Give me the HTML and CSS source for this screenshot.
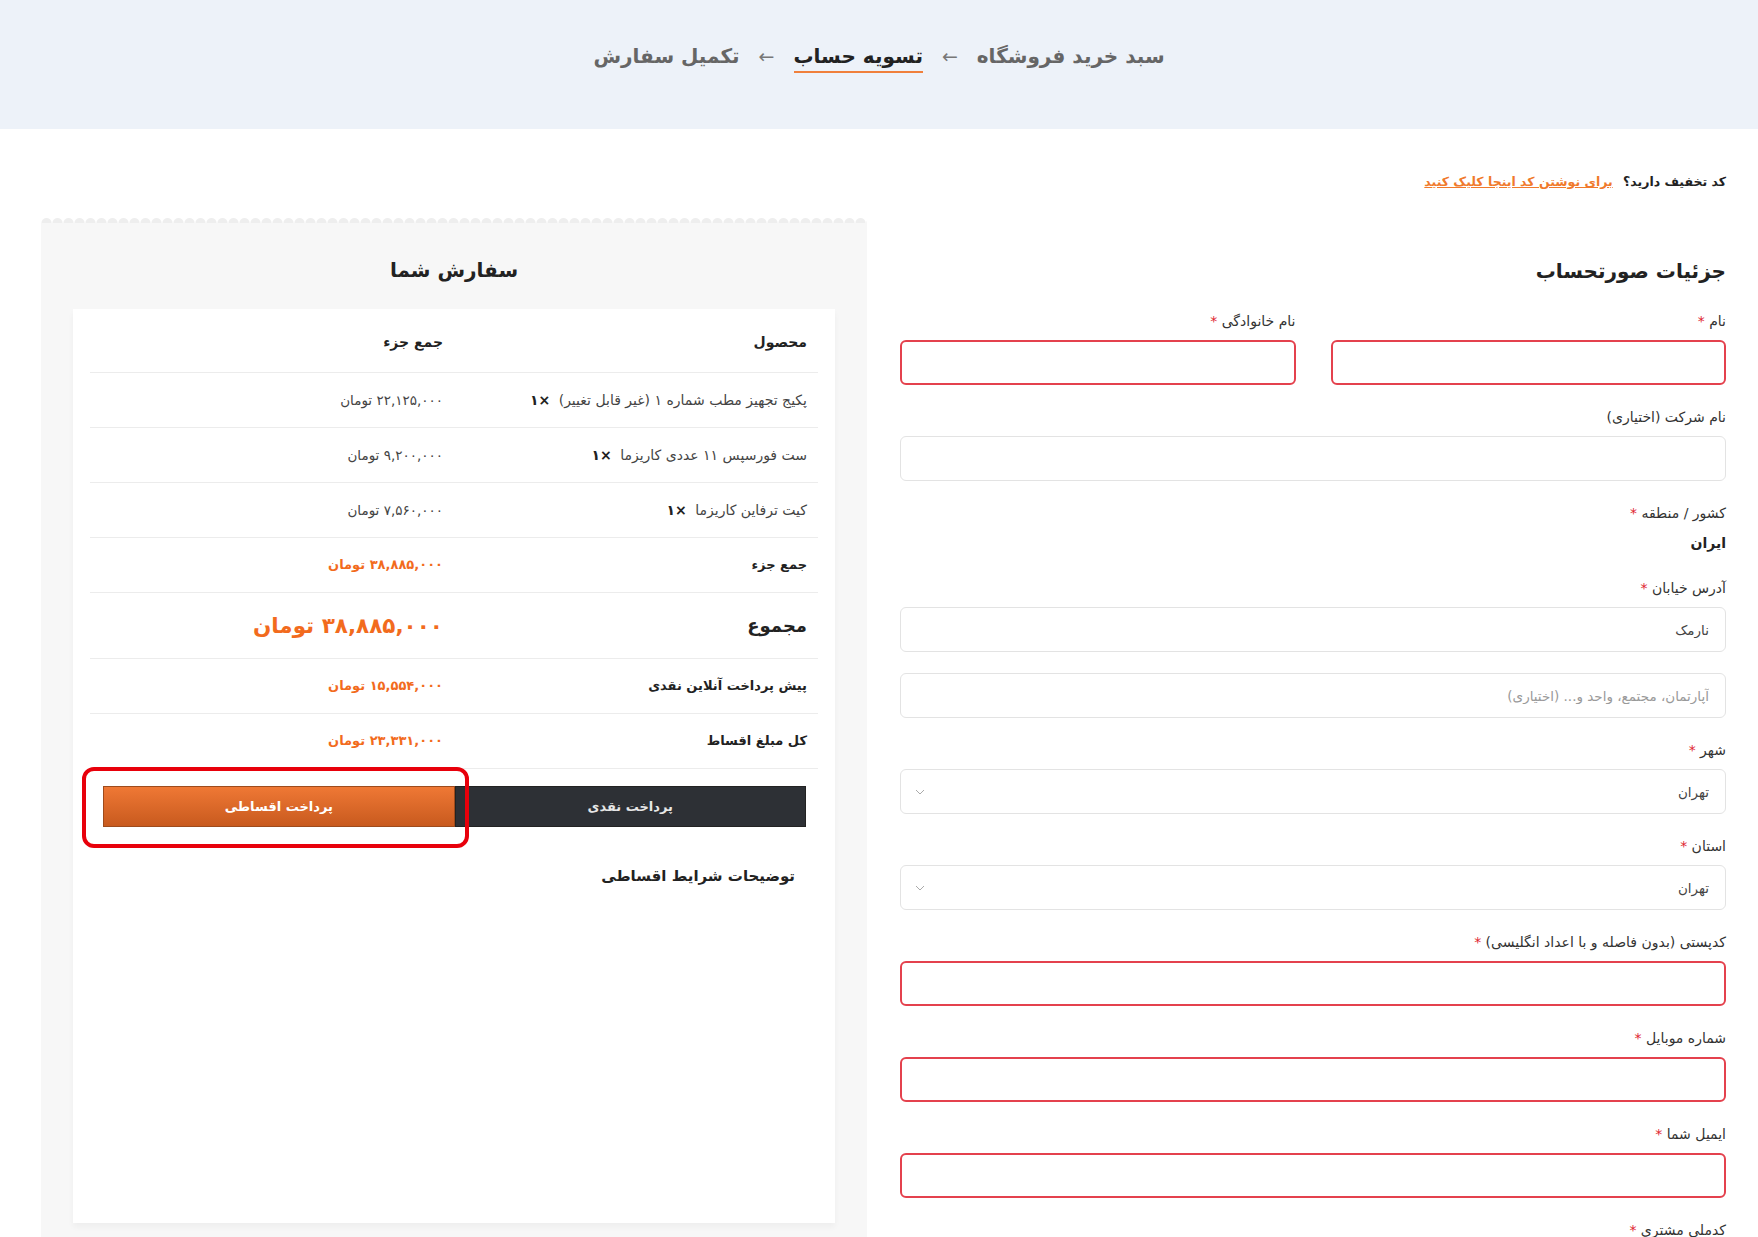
FILE: index.html
```html
<!DOCTYPE html>
<html lang="fa" dir="rtl">
<head>
  <meta charset="UTF-8">
  <meta name="viewport" content="width=device-width, initial-scale=1.0">
  <title>تسویه حساب</title>
  <link rel="stylesheet" href="styles.css">
</head>
<body>
  <header class="steps">
    <span class="step">سبد خرید فروشگاه</span>
    <span class="arrow">←</span>
    <span class="step active">تسویه حساب</span>
    <span class="arrow">←</span>
    <span class="step">تکمیل سفارش</span>
  </header>

  <div class="page">
    <p class="coupon">کد تخفیف دارید؟ <a href="#">برای نوشتن کد اینجا کلیک کنید</a></p>

    <div class="checkout">
      <!-- billing form -->
      <section class="billing">
        <h2>جزئیات صورتحساب</h2>

        <div class="row-two">
          <div class="field">
            <label>نام <em>*</em></label>
            <input type="text" class="invalid">
          </div>
          <div class="field">
            <label>نام خانوادگی <em>*</em></label>
            <input type="text" class="invalid">
          </div>
        </div>

        <div class="field">
          <label>نام شرکت (اختیاری)</label>
          <input type="text">
        </div>

        <div class="field country">
          <label>کشور / منطقه <em>*</em></label>
          <strong>ایران</strong>
        </div>

        <div class="field">
          <label>آدرس خیابان <em>*</em></label>
          <input type="text" value="نارمک">
          <input type="text" class="second" placeholder="آپارتمان، مجتمع، واحد و... (اختیاری)">
        </div>

        <div class="field">
          <label>شهر <em>*</em></label>
          <div class="select">
            <span>تهران</span>
            <svg width="10" height="6" viewBox="0 0 10 6"><path d="M1 1l4 4 4-4" fill="none" stroke="#aaa" stroke-width="1"/></svg>
          </div>
        </div>

        <div class="field">
          <label>استان <em>*</em></label>
          <div class="select">
            <span>تهران</span>
            <svg width="10" height="6" viewBox="0 0 10 6"><path d="M1 1l4 4 4-4" fill="none" stroke="#aaa" stroke-width="1"/></svg>
          </div>
        </div>

        <div class="field">
          <label>کدپستی (بدون فاصله و با اعداد انگلیسی) <em>*</em></label>
          <input type="text" class="invalid">
        </div>

        <div class="field">
          <label>شماره موبایل <em>*</em></label>
          <input type="text" class="invalid">
        </div>

        <div class="field">
          <label>ایمیل شما <em>*</em></label>
          <input type="text" class="invalid">
        </div>

        <div class="field">
          <label>کدملی مشتری <em>*</em></label>
          <input type="text" class="invalid">
        </div>
      </section>

      <!-- order review -->
      <aside class="order">
        <h3>سفارش شما</h3>
        <div class="order-card">
          <table class="order-table">
            <thead>
              <tr><th>محصول</th><th>جمع جزء</th></tr>
            </thead>
            <tbody>
              <tr class="item">
                <td>پکیج تجهیز مطب شماره ۱ (غیر قابل تغییر) <b>×۱</b></td>
                <td class="price">۲۲,۱۲۵,۰۰۰ تومان</td>
              </tr>
              <tr class="item">
                <td>ست فورسپس ۱۱ عددی کاریزما <b>×۱</b></td>
                <td class="price">۹,۲۰۰,۰۰۰ تومان</td>
              </tr>
              <tr class="item">
                <td>کیت ترفاین کاریزما <b>×۱</b></td>
                <td class="price">۷,۵۶۰,۰۰۰ تومان</td>
              </tr>
              <tr class="sum">
                <th>جمع جزء</th>
                <td class="accent">۳۸,۸۸۵,۰۰۰ تومان</td>
              </tr>
              <tr class="total">
                <th>مجموع</th>
                <td class="accent">۳۸,۸۸۵,۰۰۰ تومان</td>
              </tr>
              <tr class="sum">
                <th>پیش پرداخت آنلاین نقدی</th>
                <td class="accent">۱۵,۵۵۴,۰۰۰ تومان</td>
              </tr>
              <tr class="sum">
                <th>کل مبلغ اقساط</th>
                <td class="accent">۲۳,۳۳۱,۰۰۰ تومان</td>
              </tr>
            </tbody>
          </table>

          <div class="pay-tabs">
            <button class="tab dark">پرداخت نقدی</button>
            <button class="tab orange">پرداخت اقساطی</button>
          </div>

          <h4 class="terms">توضیحات شرایط اقساطی</h4>
        </div>
      </aside>
    </div>
  </div>
</body>
</html>
```

FILE: styles.css
```css
* {
  box-sizing: border-box;
}
body {
  margin: 0;
  font-family: "DejaVu Sans", sans-serif;
  color: #333;
  background: #fff;
}

/* steps bar */
.steps {
  height: 129px;
  background: #edf2f9;
  display: flex;
  justify-content: center;
  align-items: center;
  gap: 19px;
  padding-bottom: 18px;
  font-size: 20px;
  font-weight: bold;
  color: #666;
}
.steps .arrow {
  font-weight: normal;
  font-size: 19px;
  color: #777;
}
.steps .active {
  color: #222;
  border-bottom: 2px solid #f0803c;
  padding-bottom: 3px;
  margin-top: 5px;
}

.page {
  padding: 0 32px 0 41px;
}
.coupon {
  margin: 42px 0 0;
  line-height: 22px;
  font-size: 12.5px;
  font-weight: bold;
  color: #222;
}
.coupon a {
  color: #f07a2c;
  margin-right: 6px;
}

.checkout {
  display: grid;
  grid-template-columns: 1fr 1fr;
  column-gap: 33px;
  margin-top: 20px;
  align-items: start;
}

/* billing */
.billing h2 {
  margin: 41px 0 22px;
  line-height: 34px;
  font-size: 20px;
  color: #222;
}
.row-two {
  display: grid;
  grid-template-columns: 1fr 1fr;
  column-gap: 35px;
}
.field {
  margin-bottom: 21px;
}
.field label {
  display: block;
  line-height: 22px;
  margin-bottom: 8px;
  font-size: 14px;
  color: #333;
}
.field em {
  font-style: normal;
  color: #e0242f;
}
.field input,
.select {
  display: block;
  width: 100%;
  height: 45px;
  border: 1px solid #e3e3e3;
  border-radius: 6px;
  padding: 0 16px;
  font-family: inherit;
  font-size: 13.5px;
  color: #444;
  background: #fff;
}
.field input::placeholder {
  color: #9a9a9a;
}
.field input.invalid {
  border: 2px solid #e4414d;
}
.field input.second {
  margin-top: 21px;
}
.select {
  display: flex;
  align-items: center;
  justify-content: space-between;
  padding: 0 16px 0 14px;
}
.country {
  margin-bottom: 23px;
}
.country strong {
  display: block;
  line-height: 22px;
  font-size: 14px;
  color: #222;
}

/* order review */
.order {
  position: relative;
  margin-top: 10px;
  padding: 30px 32px 32px;
  background: #f7f7f7;
}
.order::before {
  content: "";
  position: absolute;
  top: -8px;
  left: 0;
  right: 0;
  height: 8px;
  background: radial-gradient(circle at 50% 100%, #eeeeee 4.5px, transparent 5.5px) repeat-x;
  background-size: 11px 8px;
}
.order h3 {
  margin: 0 0 22px;
  line-height: 34px;
  text-align: center;
  font-size: 20px;
  color: #222;
}
.order-card {
  min-height: 914px;
  padding: 0 17px 20px;
  background: #fff;
  box-shadow: 0 4px 6px rgba(0, 0, 0, 0.04);
}
.order-table {
  width: 100%;
  border-collapse: collapse;
  font-size: 14px;
}
.order-table th,
.order-table td {
  width: 50%;
  padding: 0 11px;
  text-align: right;
  border-bottom: 1px solid #ececec;
}
.order-table thead th {
  height: 63px;
  padding-top: 4px;
  font-size: 14px;
  color: #222;
}
.order-table tbody th {
  font-size: 13px;
  color: #222;
}
.order-table tr.item td,
.order-table tr.sum th,
.order-table tr.sum td {
  height: 55px;
}
.order-table .item td {
  color: #444;
}
.order-table .item b {
  color: #222;
  margin-right: 4px;
}
.order-table .price {
  color: #999;
  font-size: 13.5px;
}
.order-table .accent {
  color: #f26b1d;
  font-weight: bold;
  font-size: 13px;
}
.order-table tr.total th,
.order-table tr.total td {
  height: 66px;
}
.order-table tr.total th {
  font-size: 18px;
}
.order-table tr.total td {
  font-size: 21.5px;
}

.pay-tabs {
  display: flex;
  margin: 17px 12px 0 13px;
}
.tab {
  flex: 1;
  height: 41px;
  font-family: inherit;
  font-size: 13px;
  font-weight: bold;
  color: #fff;
  cursor: pointer;
}
.tab.dark {
  background: #2d3035;
  border: 1px solid #222;
  color: #e6e6e6;
}
.tab.orange {
  position: relative;
  background: linear-gradient(#ef7835, #c85a1e);
  border: 1px solid #9e4b1c;
}
.tab.orange::after {
  content: "";
  position: absolute;
  top: -20px;
  bottom: -22px;
  left: -22px;
  right: -15px;
  border: 4px solid #e8000b;
  border-radius: 12px;
}
.terms {
  margin: 37px 23px 0 0;
  line-height: 24px;
  font-size: 15px;
  color: #222;
}
```
